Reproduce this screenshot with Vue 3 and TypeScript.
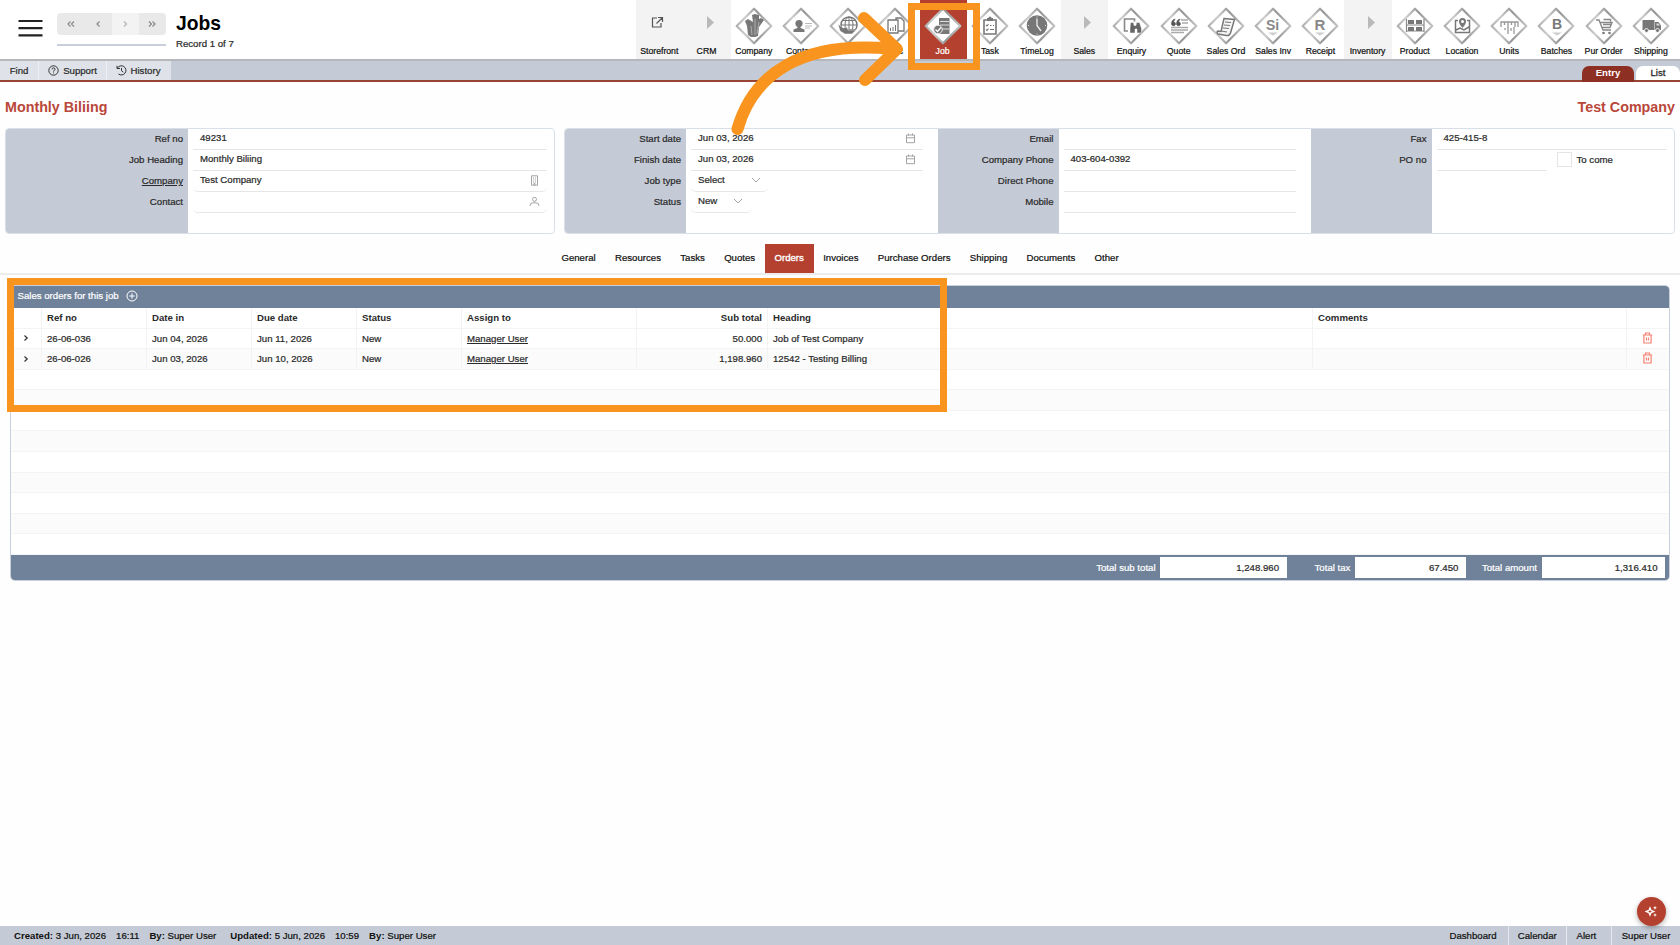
<script setup lang="ts">
interface Module {
  label: string
  icon?: string
  kind?: 'group' | 'open' | 'active'
}

const modules: Module[] = [
  { label: 'Storefront', kind: 'open' },
  { label: 'CRM', kind: 'group' },
  { label: 'Company', icon: '<path d="M10 14l3-2 5 3-1-7 3-1 4 1 0 4 2-1 3 2-5 7-1 9-3 1-4 0-3-2-1-9z" fill="#777"/><path d="M16 19l1 9M20 12l0 16M24 15l-2 12" stroke="#bbb" stroke-width=".8" fill="none"/>' },
  { label: 'Contact', icon: '<circle cx="17" cy="16.500" r="3.600"/><path d="M15.400 18h3.200v3l3.900 1.500v2.500h-11v-2.500l3.900-1.500z"/><path d="M23 16.500h7M23 19h7M23 21h5" stroke="#bbb" stroke-width="1"/>' },
  { label: '', icon: '<circle cx="20" cy="18" r="8" fill="none" stroke="#777" stroke-width="1.500"/><path d="M12 18h16M20 10v16M14 13.500h12M14 22.500h12" stroke="#777" stroke-width="1"/><ellipse cx="20" cy="18" rx="4" ry="8" fill="none" stroke="#777"/><path d="M9 17l5 4 4-1 1 3h8l-4 4h-7l-5-3z" stroke="#fff" stroke-width=".5"/>' },
  { label: 'Doc', icon: '<path d="M12 13h10v13H12zM20 13v-2h5l3 3v10h-6" fill="none" stroke="#777" stroke-width="1.300"/><path d="M14 24v-3h1v3zM16.500 24v-4h1v4zM19 24v-6h1v6z"/>' },
  { label: 'Job', kind: 'active', icon: '<path d="M15 11h10.500v16H15z"/><path d="M16 14.500h9M16 18h9M18 22h7" stroke="#ddd" stroke-width="1"/><circle cx="14" cy="22.500" r="4.300" stroke="#eee" stroke-width="1"/><path d="M11.500 22.500l2 2 3.500-4" fill="none" stroke="#fff" stroke-width="1.300"/>' },
  { label: 'Task', icon: '<path d="M13 13h12v14H13z" fill="none" stroke="#777" stroke-width="1.600"/><path d="M16 11h1.500a1.500 1.500 0 013 0H22v3h-6z"/><path d="M15 18l1 1 1.500-2M15 22.500l1 1 1.500-2M19 18.500h1.500M22 18.500h1M19 22.500h4" fill="none" stroke="#777" stroke-width="1.100"/>' },
  { label: 'TimeLog', icon: '<circle cx="19" cy="18.500" r="10.300"/><path d="M19 11.500v7l4 5.500" fill="none" stroke="#eee" stroke-width="1.300"/><path d="M19 9.500v1M19 26.500v1M10 18.500h1M27 18.500h1" stroke="#ddd"/>' },
  { label: 'Sales', kind: 'group' },
  { label: 'Enquiry', icon: '<path d="M16 24h-3.500V12h10v2.500" fill="none" stroke="#888" stroke-width="1.600"/><path d="M18.500 15.500h3l.5 3h2l.5-3h3l2 6v4.500h-4.500v-4h-2v4h-5v-4.500z" fill="#666" stroke="#fff" stroke-width=".5"/>' },
  { label: 'Quote', icon: '<path d="M14.500 12q-3 1-3 5a2 2 0 103.500-1.500q-1.300 0-1.300-.8 0-1 1.300-2zM19.500 12q-3 1-3 5a2 2 0 103.500-1.500q-1.300 0-1.300-.8 0-1 1.300-2z" fill="#555" stroke="#555" stroke-width=".6"/><path d="M21 13h7M22 16h6M11 20.500h17M11 23h17M11 25.500h13" stroke="#aaa" stroke-width="1.300"/>' },
  { label: 'Sales Ord', icon: '<path d="M17 11.500l10.500 1-4 13.500q-1 3-4 2.500L11 27q-2-2 0-3l3 .5z" fill="#f4f4f4" stroke="#777" stroke-width="1.500"/><path d="M18 15l6 .5M17 18l6 .5M16 21l6 .5M14 24l6 1" stroke="#777" stroke-width="1.100"/>' },
  { label: 'Sales Inv', icon: '<text x="18.500" y="22.500" text-anchor="middle" font-size="14" font-weight="700" font-family="Liberation Sans,sans-serif" fill="#888">Si</text><path d="M14 25.500h10l-5 3z" fill="#ccc"/>' },
  { label: 'Receipt', icon: '<text x="19" y="23" text-anchor="middle" font-size="15" font-weight="700" font-family="Liberation Sans,sans-serif" fill="#888">R</text><path d="M14 25.500h10l-5 3z" fill="#ccc"/>' },
  { label: 'Inventory', kind: 'group' },
  { label: 'Product', icon: '<path d="M10.500 12v13M28 12v13M10 18h18M10 24h18" fill="none" stroke="#888" stroke-width="1.200"/><path d="M12 13h6v4h-6zM20 13h6v4h-6zM12 20h6v4h-6zM20 20h6v4h-6z"/>' },
  { label: 'Location', icon: '<path d="M15 13.500h-2.500v12h14v-12H24M13 23l4-2 4 2 5-3" fill="none" stroke="#777" stroke-width="1.500"/><path d="M19.500 21q-3.500-4-3.500-6.500a3.500 3.500 0 017 0q0 2.500-3.500 6.500z" fill="#777"/><circle cx="19.500" cy="14.500" r="1.500" fill="#fff"/>' },
  { label: 'Units', icon: '<path d="M11 20v-5h17v5M14.500 15v3M18 15v5M21.500 15v3M25 15v5" fill="none" stroke="#999" stroke-width="1.300"/><path d="M15 21v2M18 20v7M21 21v3M24 20v7" stroke="#999" stroke-width="1.300"/>' },
  { label: 'Batches', icon: '<text x="20" y="22" text-anchor="middle" font-size="14" font-weight="700" font-family="Liberation Sans,sans-serif" fill="#777">B</text><path d="M15 25.500h10l-5 3z" fill="#ccc"/>' },
  { label: 'Pur Order', icon: '<path d="M11 13h3l4 10h8M15 15.500h12l-2 5h-8M18 17.500h8M18.500 12.500h7v2" fill="none" stroke="#888" stroke-width="1.400"/><circle cx="18.500" cy="26" r="1.300"/><circle cx="24.500" cy="26" r="1.300"/>' },
  { label: 'Shipping', icon: '<path d="M10.500 13h12v10h-12zM23 15h3.500l2.500 3.500V23h-6z"/><path d="M24.500 16.500h2l1.500 2h-3.500z" fill="#ddd"/><circle cx="14.500" cy="23.500" r="2" stroke="#fff" stroke-width=".8"/><circle cx="25.500" cy="23.500" r="2" stroke="#fff" stroke-width=".8"/>' },
]

const tabs: string[] = ['General', 'Resources', 'Tasks', 'Quotes', 'Orders', 'Invoices', 'Purchase Orders', 'Shipping', 'Documents', 'Other']

const orders = [
  { ref: '26-06-036', dateIn: 'Jun 04, 2026', due: 'Jun 11, 2026', status: 'New', user: 'Manager User', sub: '50.000', heading: 'Job of Test Company' },
  { ref: '26-06-026', dateIn: 'Jun 03, 2026', due: 'Jun 10, 2026', status: 'New', user: 'Manager User', sub: '1,198.960', heading: '12542 - Testing Billing' },
]
</script>

<template>
  <div class="page">
    <header class="top">
      <svg class="burger" width="25" height="18" viewBox="0 0 25 18"><path d="M.5 2h24M.5 9.200h24M.5 16.400h24" stroke="#222" stroke-width="2.200" /></svg>
      <div class="pager">
        <div class="pager-btns">
          <span><svg width="10" height="8" viewBox="0 0 10 8"><path d="M4.500 1.500L2 4l2.500 2.500M8 1.500L5.500 4 8 6.500" /></svg></span>
          <span><svg width="10" height="8" viewBox="0 0 10 8"><path d="M6.500 1.500L4 4l2.500 2.500" /></svg></span>
          <span class="off"><svg width="10" height="8" viewBox="0 0 10 8"><path d="M4 1.500L6.500 4 4 6.500" /></svg></span>
          <span><svg width="10" height="8" viewBox="0 0 10 8"><path d="M2 1.500L4.500 4 2 6.500M5.500 1.500L8 4 5.500 6.500" /></svg></span>
        </div>
        <div class="pager-line"></div>
      </div>
      <div class="heading">
        <h1>Jobs</h1>
        <p>Record 1 of 7</p>
      </div>
      <nav class="modules">
        <div v-for="(m, i) in modules" :key="i" class="module" :class="m.kind">
          <div class="mod-icon">
            <svg v-if="m.kind === 'open'" width="38" height="38" viewBox="0 0 38 38"><path d="M17 11h-4.500v9h8.500v-4M16.500 16.500l5.500-5.500M18 10.500h4.500v4.500" fill="none" stroke="#555" stroke-width="1.200" /></svg>
            <svg v-else-if="m.kind === 'group'" width="38" height="38" viewBox="0 0 38 38"><path d="M19 9l7 6.500-7 6.500z" fill="#b9b9b9" /></svg>
            <svg v-else width="38" height="38" viewBox="0 0 38 38">
              <defs>
                <linearGradient id="edge" x1="0" y1="0" x2="1" y2="0"><stop offset="0" stop-color="#b0b0b0" /><stop offset=".25" stop-color="#cdcdcd" /><stop offset=".6" stop-color="#959595" /><stop offset="1" stop-color="#c2c2c2" /></linearGradient>
              </defs>
              <path d="M19 1.700l17.300 17.300-17.300 17.300L1.700 19z" fill="#fff" stroke="url(#edge)" stroke-width="2.200" stroke-linejoin="round" />
              <g fill="#777" v-html="m.icon"></g>
            </svg>
          </div>
          <span class="mod-label">{{ m.label }}</span>
        </div>
      </nav>
    </header>

    <div class="bar">
      <span class="bar-btn find">Find</span>
      <span class="bar-btn support"><svg width="11" height="11" viewBox="0 0 11 11"><circle cx="5.500" cy="5.500" r="4.700" /><path d="M4 4.400a1.500 1.500 0 113 0q0 .8-1.500 1.500v.6M5.500 7.500v.9" /></svg>Support</span>
      <span class="bar-btn history"><svg width="11" height="11" viewBox="0 0 11 11"><path d="M1 .8v2.700h3M1.300 3.200A4.600 4.600 0 112.500 9M5.500 3v2.700l1.800 1.500" /></svg>History</span>
      <span class="view entry">Entry</span>
      <span class="view list">List</span>
    </div>

    <div class="titles"><span>Monthly Biliing</span><span>Test Company</span></div>

    <div class="panels">
      <section class="panel first">
        <div class="labels"><span>Ref no</span><span>Job Heading</span><span><u>Company</u></span><span>Contact</span></div>
        <div class="fields">
          <div class="field">49231</div>
          <div class="field">Monthly Biliing</div>
          <div class="field soft">Test Company<svg width="11" height="11" viewBox="0 0 11 11"><path d="M2.500 .8h6v9.400h-6zM4 3h1M6 3h1M4 5h1M6 5h1M4 7h1M6 7h1M5 10V8.500h1V10" /></svg></div>
          <div class="field soft"><svg width="11" height="11" viewBox="0 0 11 11"><circle cx="5.500" cy="3.300" r="2" /><path d="M1 9.800q0-3 3-3h3q3 0 3 3" /></svg></div>
        </div>
      </section>
      <section class="panel second">
        <div class="labels"><span>Start date</span><span>Finish date</span><span>Job type</span><span>Status</span></div>
        <div class="fields dates">
          <div v-for="n in 2" :key="n" class="field">Jun 03, 2026<svg width="11" height="11" viewBox="0 0 11 11"><path d="M1.500 2h8v7.700h-8zM1.500 4.800h8M3.500 .5v2M7.500 .5v2" /></svg></div>
          <div class="field soft type">Select<svg width="10" height="8" viewBox="0 0 10 8"><path d="M1 2l4 4 4-4" /></svg></div>
          <div class="field soft status">New<svg width="10" height="8" viewBox="0 0 10 8"><path d="M1 2l4 4 4-4" /></svg></div>
        </div>
        <div class="labels"><span>Email</span><span>Company Phone</span><span>Direct Phone</span><span>Mobile</span></div>
        <div class="fields phones">
          <div class="field"></div>
          <div class="field">403-604-0392</div>
          <div class="field"></div>
          <div class="field"></div>
        </div>
        <div class="labels"><span>Fax</span><span>PO no</span></div>
        <div class="fields last">
          <div class="field">425-415-8</div>
          <div class="po"><div class="field"></div><i></i><span>To come</span></div>
        </div>
      </section>
    </div>

    <nav class="tabs"><span v-for="t in tabs" :key="t" :class="{ on: t === 'Orders' }">{{ t }}</span></nav>

    <section class="grid">
      <div class="grid-title">Sales orders for this job<svg width="12" height="12" viewBox="0 0 12 12"><circle cx="6" cy="6" r="5" /><path d="M6 3.300v5.400M3.300 6h5.400" /></svg></div>
      <div class="row head">
        <span></span><span>Ref no</span><span>Date in</span><span>Due date</span><span>Status</span><span>Assign to</span><span class="num">Sub total</span><span>Heading</span><span>Comments</span><span></span>
      </div>
      <div v-for="o in orders" :key="o.ref" class="row">
        <span class="expand"><svg width="6" height="8" viewBox="0 0 6 8"><path d="M1.500 1.500L4.200 4 1.500 6.500" /></svg></span>
        <span>{{ o.ref }}</span><span>{{ o.dateIn }}</span><span>{{ o.due }}</span><span>{{ o.status }}</span><span><u>{{ o.user }}</u></span><span class="num">{{ o.sub }}</span><span>{{ o.heading }}</span><span></span>
        <span class="trash"><svg width="11" height="12" viewBox="0 0 11 12"><path d="M.8 3h9.400M3.500 3V1h4v2M1.900 3v8h7.200V3M4.500 5.500v3M6.500 5.500v3" /></svg></span>
      </div>
      <div v-for="n in 9" :key="n" class="row empty"></div>
      <div class="totals">
        <label>Total sub total</label><b class="t1">1,248.960</b>
        <label>Total tax</label><b class="t2">67.450</b>
        <label>Total amount</label><b class="t3">1,316.410</b>
      </div>
    </section>

    <footer class="foot">
      <span class="c1"><b>Created:</b> 3 Jun, 2026</span><span class="c2">16:11</span><span class="c3"><b>By:</b> Super User</span>
      <span class="c4"><b>Updated:</b> 5 Jun, 2026</span><span class="c2">10:59</span><span><b>By:</b> Super User</span>
      <div class="links"><span class="l1">Dashboard</span><span class="l2">Calendar</span><span class="l3">Alert</span><span class="l4">Super User</span></div>
    </footer>

    <div class="fab"><svg width="13" height="13" viewBox="0 0 13 13"><path d="M5 2.800l1.100 2.600L8.700 6.500 6.100 7.600 5 10.200 3.900 7.600 1.300 6.500l2.600-1.100z" fill="none" stroke="#fff" stroke-width="1.300" /><path d="M10 .8l.6 1.400 1.400.6-1.400.6L10 4.800l-.6-1.400L8 2.800l1.400-.6zM10 8l.6 1.400 1.400.6-1.400.6L10 12l-.6-1.400L8 10l1.400-.6z" fill="#fff" /></svg></div>

    <div class="mark job-mark"></div>
    <div class="mark grid-mark"></div>
    <svg class="arrow" width="180" height="140" viewBox="730 0 180 140"><path d="M737.500 129C753 75 800 40 893 49M864 18l33 31-32 31" /></svg>
  </div>
</template>

<style>
body { margin: 0; background: #fff; overflow: hidden; }
</style>

<style scoped>
* { box-sizing: border-box; }
.page { position: relative; display: flex; flex-direction: column; width: 1680px; height: 945px; background: #fefefe; color: #2a2a2a; font: 9.65px/12px "Liberation Sans", Arial, sans-serif; -webkit-text-stroke: .22px currentColor; overflow: hidden; white-space: nowrap; }
svg { flex: none; display: block; fill: none; }
.top { display: flex; height: 61px; border-bottom: 2px solid #b5b7bb; background: #fff; flex: none; }
.burger { margin: 19px 0 0 18px; }
.pager { width: 109px; margin: 13px 0 0 14px; }
.pager-btns { display: flex; height: 22px; border-radius: 4px; overflow: hidden; background: #e9e9e9; }
.pager-btns span { flex: 1; display: flex; align-items: center; justify-content: center; }
.pager-btns svg { stroke: #888; stroke-width: 1.200; }
.pager-btns .off { background: #f3f3f3; }
.pager-btns .off svg { stroke: #b5b5b5; }
.pager-line { height: 2px; background: #c9cfd9; margin-top: 9px; }
.heading { margin-left: 10px; }
h1 { margin: 12px 0 0; font-size: 19.300px; line-height: 24px; color: #000; -webkit-text-stroke: 0; }
p { margin: 2px 0 0; }
.modules { display: flex; margin-left: auto; margin-right: 5px; }
.module { width: 47.230px; height: 59px; display: flex; flex-direction: column; align-items: center; padding-top: 6px; font-size: 8.700px; color: #111; }
.module.group, .module.open { background: #f3f3f3; }
.module.active { background: #b4402f; color: #fff; }
.mod-icon { height: 38px; position: relative; left: -.5px; top: .5px; }
.mod-label { margin: 0 1px 0 0; padding-top: 1px; }
.bar { display: flex; height: 21px; background: #c5cbd6; border-bottom: 2px solid #984334; flex: none; }
.bar-btn { background: #dfe3e9; display: flex; align-items: center; justify-content: center; gap: 4px; border-right: 1px solid #edf0f4; }
.bar-btn svg { stroke: #333; stroke-width: 1; }
.find { width: 39px; }
.support { width: 68px; }
.history { width: 64px; border-right: 0; padding-right: 2px; }
.view { margin-top: 5px; border-radius: 7px 7px 0 0; text-align: center; line-height: 14px; font-weight: 700; -webkit-text-stroke: 0; }
.entry { margin-left: auto; width: 52px; height: 16px; background: #8e2f23; color: #fff; }
.list { margin-left: 2px; width: 44px; height: 14px; background: #fff; font-weight: 400; -webkit-text-stroke: .3px currentColor; }
.titles { display: flex; justify-content: space-between; padding: 17px 5px 0; font-size: 14.300px; line-height: 17px; font-weight: 700; color: #b9473a; -webkit-text-stroke: 0; flex: none; height: 46px; }
.panels { display: flex; gap: 9px; padding-left: 5px; flex: none; }
.panel { display: flex; height: 106px; border: 1px solid #d9dfe8; border-radius: 4px; overflow: hidden; background: #fff; }
.first { width: 550px; }
.second { width: 1111px; }
.labels { width: 121px; background: #c5cbd6; text-align: right; padding: 0 5px 0 0; display: flex; flex-direction: column; flex: none; }
.first .labels { width: 182px; }
.labels span { height: 21px; line-height: 20px; }
u { text-underline-offset: 1px; }
.fields { flex: 1; padding: 0 7px 0 5px; }
.fields.dates { flex: 0 0 251.500px; padding-right: 15px; }
.fields.phones { flex: 0 0 252px; padding-right: 15px; }
.field { height: 21px; border-bottom: 1px solid #e6e6e6; display: flex; align-items: center; padding: 0 7px 2px; line-height: 18px; }
.field svg { margin-left: auto; stroke: #a3a3a3; stroke-width: 1; }
.field.soft { border-radius: 0 0 5px 5px; }
.type { width: 77px; }
.status { width: 61px; padding-right: 9px; }
.po { display: flex; align-items: center; height: 21px; }
.po .field { width: 110px; }
.po i { width: 15px; height: 15px; border: 1px solid #e4e4e4; margin: 0 5px 2px 10px; }
.po span { padding-bottom: 2px; }
.tabs { display: flex; justify-content: center; height: 41px; padding-top: 10px; border-bottom: 2px solid #ececec; flex: none; color: #111; }
.tabs span { padding: 0 9.650px; line-height: 28px; height: 29px; }
.tabs .on { background: #b4402f; color: #fff; -webkit-text-stroke: .35px currentColor; }
.grid { margin: 10px 0 0 10px; width: 1660px; height: 296px; border: 1px solid #c8d0dc; border-radius: 5px; overflow: hidden; display: flex; flex-direction: column; background: #fff; flex: none; }
.grid-title { height: 22px; background: #70829a; color: #fff; display: flex; align-items: center; gap: 7px; padding: 0 0 2px 6.500px; flex: none; }
.grid-title svg { stroke: #fff; stroke-width: 1; }
.row { display: grid; grid-template-columns: 31px 105px 105px 105px 105px 175px 131px 545px 314px 1fr; flex: 1; border-bottom: 1px solid #f4f4f4; min-height: 0; }
.row span { border-right: 1px solid #f3f3f3; padding-left: 5px; line-height: 19px; min-width: 0; }
.row span:last-child { border-right: 0; }
.row.head { flex: 0 0 20.500px; font-weight: 700; -webkit-text-stroke: 0; }
.row.head span { line-height: 20px; }
.row:nth-child(2n) { background: #fbfbfb; }
.row.head:nth-child(2) { background: #fff; }
.row .num { text-align: right; padding-right: 5px; }
.row .expand { padding: 5.500px 0 0 12px; }
.expand svg { stroke: #333; stroke-width: 1.200; }
.row .trash { padding: 3px 0 0 15px; }
.trash svg { stroke: #f58272; stroke-width: 1.200; }
.totals { display: flex; height: 25px; background: #70829a; align-items: center; justify-content: flex-end; padding-right: 4px; flex: none; }
.totals label { color: #fff; margin-right: 4.500px; }
.totals b { height: 21px; background: #fff; line-height: 21px; text-align: right; padding-right: 7.500px; font-weight: 400; }
.t1 { width: 126.500px; margin-right: 28px; }
.t2 { width: 111px; margin-right: 16px; }
.t3 { width: 123.500px; }
.foot { margin-top: auto; height: 19px; background: #c5cbd6; display: flex; align-items: center; padding-left: 14px; color: #111; flex: none; }
.foot b { -webkit-text-stroke: 0; }
.c1, .c2 { margin-right: 10px; }
.c3 { margin-right: 14px; }
.c4 { margin-right: 10px; }
.links { display: flex; margin-left: auto; height: 19px; line-height: 19px; }
.links span { border-left: 1px solid #e4e8ee; text-align: center; }
.links .l1 { width: 68px; border: 0; padding-right: 1px; }
.links .l2 { width: 58.500px; }
.links .l3 { width: 45px; text-align: left; padding-left: 9.500px; }
.links .l4 { width: 69px; }
.fab { position: absolute; left: 1637px; top: 897px; width: 29px; height: 29px; border-radius: 50%; background: #b4402f; box-shadow: 0 2px 5px rgba(0, 0, 0, .3); display: flex; align-items: center; justify-content: center; }
.mark { position: absolute; border: 7px solid #f9941e; }
.job-mark { left: 908px; top: 3px; width: 72px; height: 67px; }
.grid-mark { left: 7px; top: 277.500px; width: 940px; height: 134px; }
.arrow { position: absolute; left: 730px; top: 0; }
.arrow path { stroke: #f9941e; stroke-width: 12; stroke-linecap: round; stroke-linejoin: round; }
</style>
